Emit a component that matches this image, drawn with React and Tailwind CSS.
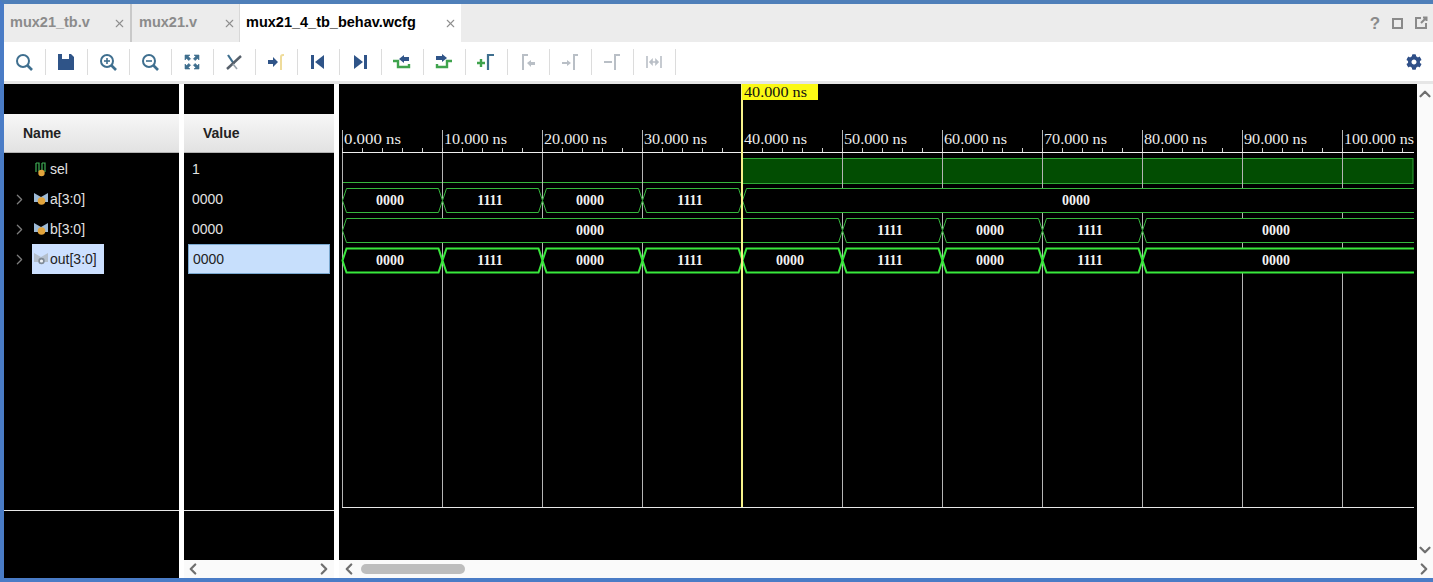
import React from 'react';
import { FaCog } from 'react-icons/fa';
import { ChevronRight, ChevronLeft, ChevronUp, ChevronDown, X } from 'lucide-react';

const NAVY = '#2f5488';
const TEAL = '#3f6f8f';
const GREEN = '#3fa34d';
const MUTED = '#b9bfc6';

const Mag = ({ sign }) => (
  <svg width="20" height="20" viewBox="0 0 20 20" fill="none" stroke={TEAL} strokeWidth="2">
    <circle cx="9" cy="9" r="6" />
    <path d="M13.5 13.5L18 18" strokeWidth="2.6" />
    {sign && <path d="M6 9h6" strokeWidth="1.6" />}
    {sign === 'plus' && <path d="M9 6v6" strokeWidth="1.6" />}
  </svg>
);

const Floppy = () => (
  <svg width="20" height="20" viewBox="0 0 20 20">
    <path d="M2 2h13l3 3v13H2z" fill={NAVY} />
    <rect x="6" y="2" width="7" height="5" fill="#fff" />
    <rect x="5" y="12" width="10" height="6" fill={NAVY} />
  </svg>
);

const Fit = () => (
  <svg width="20" height="20" viewBox="0 0 20 20" fill={TEAL} stroke={TEAL} strokeWidth="0.6">
    <path d="M3 3h5L6.4 4.6 8.6 6.8 6.8 8.6 4.6 6.4 3 8z" />
    <path d="M17 3v5l-1.6-1.6-2.2 2.2-1.8-1.8 2.2-2.2L12 3z" />
    <path d="M3 17v-5l1.6 1.6 2.2-2.2 1.8 1.8-2.2 2.2L8 17z" />
    <path d="M17 17h-5l1.6-1.6-2.2-2.2 1.8-1.8 2.2 2.2L17 12z" />
  </svg>
);

const NoMarker = () => (
  <svg width="20" height="20" viewBox="0 0 20 20" fill="none">
    <path d="M4 3l6 9" stroke={TEAL} strokeWidth="2.2" />
    <path d="M3 17L17 4" stroke="#56606b" strokeWidth="2.4" />
    <path d="M9 12l4 5" stroke="#9aa3ac" strokeWidth="1.6" />
  </svg>
);

const ArrowEdge = ({ color = NAVY, edge = '#efdc9c' }) => (
  <svg width="20" height="20" viewBox="0 0 20 20" fill="none">
    <path d="M2 8h5V5l5 5-5 5v-3H2z" fill={color} />
    <path d="M15 18V5q0-2 2-2h1" stroke={edge} strokeWidth="2" />
  </svg>
);

const SkipStart = () => (
  <svg width="20" height="20" viewBox="0 0 20 20" fill={NAVY}>
    <rect x="3" y="3" width="3" height="14" />
    <path d="M16 3v14L7 10z" />
  </svg>
);

const SkipEnd = () => (
  <svg width="20" height="20" viewBox="0 0 20 20" fill={NAVY}>
    <path d="M4 3v14l9-7z" />
    <rect x="14" y="3" width="3" height="14" />
  </svg>
);

const Falling = () => (
  <svg width="20" height="20" viewBox="0 0 20 20" fill="none">
    <path d="M1 9h5v6h11v-3" stroke={GREEN} strokeWidth="2.4" />
    <path d="M7 7l5-4v2h5v4h-5v2z" fill={NAVY} />
  </svg>
);

const Rising = () => (
  <svg width="20" height="20" viewBox="0 0 20 20" fill="none">
    <path d="M3 12v3h10V9h5" stroke={GREEN} strokeWidth="2.4" />
    <path d="M2 4h6V2l5 4-5 4V8H2z" fill={NAVY} />
  </svg>
);

const AddMarker = () => (
  <svg width="20" height="20" viewBox="0 0 20 20" fill="none">
    <path d="M1 11h8M5 7v8" stroke={GREEN} strokeWidth="2.4" />
    <path d="M12 18V3h6" stroke={TEAL} strokeWidth="2.2" />
  </svg>
);

const PrevMarker = () => (
  <svg width="20" height="20" viewBox="0 0 20 20" fill="none">
    <path d="M5 18V3h5" stroke={MUTED} strokeWidth="2" />
    <path d="M9 11l4-3v2h4v3h-4v2z" fill={MUTED} />
  </svg>
);

const NextMarker = () => (
  <svg width="20" height="20" viewBox="0 0 20 20" fill="none">
    <path d="M2 10h5V8l4 3-4 3v-2H2z" fill={MUTED} />
    <path d="M14 18V3h4" stroke={MUTED} strokeWidth="2" />
  </svg>
);

const RemoveMarker = () => (
  <svg width="20" height="20" viewBox="0 0 20 20" fill="none">
    <path d="M2 10h8" stroke={MUTED} strokeWidth="2" />
    <path d="M13 18V3h5" stroke={MUTED} strokeWidth="2" />
  </svg>
);

const Span = () => (
  <svg width="20" height="20" viewBox="0 0 20 20" fill="none" stroke={MUTED} strokeWidth="1.6">
    <path d="M3 4v12M17 4v12M6 10h8" />
    <path d="M6 10l2-2v4zM14 10l-2-2v4z" fill={MUTED} />
  </svg>
);

const tools = [
  <Mag />, <Floppy />, <Mag sign="plus" />, <Mag sign="minus" />, <Fit />, <NoMarker />, <ArrowEdge />, <SkipStart />,
  <SkipEnd />, <Falling />, <Rising />, <AddMarker />, <PrevMarker />, <NextMarker />, <RemoveMarker />, <Span />,
];

const ScalarIcon = () => (
  <svg width="14" height="16" viewBox="0 0 14 16" className="shrink-0">
    <path d="M2 2v9M2 2h3v9M8 2h3v9M8 2v9" fill="none" stroke="#3fae55" strokeWidth="1.2" />
    <circle cx="7.5" cy="12" r="3.2" fill="#e2a43c" />
  </svg>
);

const BusIcon = ({ out }) => (
  <svg width="16" height="14" viewBox="0 0 16 14" className="shrink-0">
    <path d="M1 1L8 5L15 1V10H1Z" fill={out ? '#b4bfcc' : '#9dbad6'} />
    {out ? (
      <circle cx="8.5" cy="9" r="2.4" fill="#eef2f7" stroke="#7f8a96" strokeWidth="1.6" />
    ) : (
      <circle cx="8.5" cy="9" r="3.8" fill="#e2a43c" />
    )}
  </svg>
);

const signals = [
  { name: 'sel', value: '1' },
  { name: 'a[3:0]', value: '0000', bus: true },
  { name: 'b[3:0]', value: '0000', bus: true },
  { name: 'out[3:0]', value: '0000', bus: true, out: true },
];

const gridXs = [342, 442, 542, 642, 742, 842, 942, 1042, 1142, 1242, 1342];

// [start x, end x, label, label x]
const rows = [
  {
    top: 188,
    segs: [[342, 442, '0000', 390], [442, 542, '1111', 490], [542, 642, '0000', 590], [642, 742, '1111', 690], [742, 1430, '0000', 1076]],
  },
  {
    top: 218,
    segs: [[342, 842, '0000', 590], [842, 942, '1111', 890], [942, 1042, '0000', 990], [1042, 1142, '1111', 1090], [1142, 1430, '0000', 1276]],
  },
  {
    top: 248,
    bold: true,
    segs: [[342, 442, '0000', 390], [442, 542, '1111', 490], [542, 642, '0000', 590], [642, 742, '1111', 690], [742, 842, '0000', 790], [842, 942, '1111', 890], [942, 1042, '0000', 990], [1042, 1142, '1111', 1090], [1142, 1430, '0000', 1276]],
  },
];

const Waveform = () => {
  const ticks = [];
  for (let x = 342; x < 1414; x += 20) ticks.push(x);

  return (
    <svg width="1078" height="476" viewBox="339 84 1078 476" className="block bg-black">
      <defs>
        <clipPath id="waves">
          <rect x="340" y="84" width="1074" height="430" />
        </clipPath>
      </defs>

      {/* sel high part goes under the grid */}
      <path d="M342 182.5H742" stroke="#36b53c" fill="none" />
      <rect x="742" y="158.5" width="671" height="25" fill="#024d02" stroke="#2ea836" />

      {/* grid */}
      {gridXs.map((x) => (
        <line key={x} x1={x + 0.5} x2={x + 0.5} y1={130} y2={507} stroke="#b5b5b5" strokeWidth="1" />
      ))}
      <line x1="342" x2="1414" y1="507.5" y2="507.5" stroke="#e8e8e8" />

      {/* time scale */}
      <line x1="342" x2="1414" y1="152.5" y2="152.5" stroke="#f0f0f0" />
      {ticks.map((x) => (
        <line key={x} x1={x + 0.5} x2={x + 0.5} y1={148} y2={152} stroke="#d0d0d0" />
      ))}
      {gridXs.map((x, i) => (
        <text
          key={x}
          x={x + 2}
          y={144}
          fill="#ececec"
          fontFamily="'Liberation Serif', serif"
          fontSize="15"
          textLength={i === 0 ? 57 : i === 10 ? 70 : 63}
          lengthAdjust="spacingAndGlyphs"
        >
          {i * 10}.000 ns
        </text>
      ))}

      {/* bus rows */}
      <g clipPath="url(#waves)">
        {rows.map((row) =>
          row.segs.map(([a, b, label, lx]) => (
            <g key={row.top + '-' + a}>
              <path
                d={`M${b + 0.5} ${row.top + 12.5}L${b - 3.5} ${row.top + 0.5}H${a + 4.5}L${a + 0.5} ${row.top + 12.5}L${a + 4.5} ${row.top + 24.5}H${b - 3.5}Z`}
                fill="#000"
                stroke={row.bold ? '#38e83c' : '#35b83d'}
                strokeWidth={row.bold ? 2 : 1}
              />
              <text x={lx} y={row.top + 17} fill="#f2f2f2" fontFamily="'Liberation Serif', serif" fontSize="14" fontWeight="700" textAnchor="middle">
                {label}
              </text>
            </g>
          ))
        )}
      </g>

      {/* cursor */}
      <line x1="742" x2="742" y1="84" y2="507" stroke="#f6f28a" strokeWidth="2" />
      <rect x="742" y="84" width="76" height="16" fill="#fbf915" />
      <text x="744" y="97" fill="#111" fontFamily="'Liberation Serif', serif" fontSize="15" textLength="63" lengthAdjust="spacingAndGlyphs">
        40.000 ns
      </text>
    </svg>
  );
};

export default function App() {
  return (
    <div className="w-[1433px] h-[582px] overflow-hidden flex flex-col bg-white border-t-4 border-b-4 border-l-4 border-t-[#4f7fb9] border-b-[#4a7cc6] border-l-[#4a7cc6] font-['Liberation_Sans',Arial,sans-serif]">
      {/* Tabs */}
      <div className="h-[38px] shrink-0 bg-[#ececec] flex items-stretch text-[14.5px] font-bold">
        <div className="w-[128px] flex items-center pl-[6px] pr-[3px] justify-between text-[#8b8b8b] border-r-2 border-[#c9c9c9]">
          <span>mux21_tb.v</span>
          <X size={13} strokeWidth={2} className="text-[#8f8f8f] mr-[1px]" />
        </div>
        <div className="w-[108px] flex items-center pl-[7px] justify-between text-[#8b8b8b] border-r border-[#d8d8d8]">
          <span>mux21.v</span>
          <X size={13} strokeWidth={2} className="text-[#8f8f8f] mr-[3px]" />
        </div>
        <div className="w-[221px] flex items-center pl-[6px] justify-between bg-white text-black">
          <span>mux21_4_tb_behav.wcfg</span>
          <X size={13} strokeWidth={2} className="text-[#8f8f8f] mr-[4px]" />
        </div>
        <div className="flex-1 flex items-center justify-end gap-[9px] pr-[5px] text-[#8a8a8a]">
          <span className="w-[14px] text-center text-[17px] leading-none">?</span>
          <span className="w-[11px] h-[11px] border-2 border-[#8a8a8a] mx-[1px]"></span>
          <svg width="14" height="14" viewBox="0 0 14 14" fill="none" stroke="#8a8a8a" strokeWidth="2" className="ml-[1px]">
            <path d="M7 2H2v10h10V7M7 7l5-5M9 1.5h3.5V5" />
          </svg>
        </div>
      </div>

      {/* Toolbar */}
      <div className="h-[39px] shrink-0 bg-white flex items-center">
        {tools.map((icon, i) => (
          <div key={i} className="w-[42px] h-[26px] pr-[2px] flex items-center justify-center border-r border-[#dcdcdc]">
            {icon}
          </div>
        ))}
        <div className="ml-auto pr-[11px] flex items-center">
          <FaCog size={16} color="#2f4f88" />
        </div>
      </div>
      <div className="h-[3px] shrink-0 bg-[#e6e6e6]"></div>

      {/* Main */}
      <div className="flex-1 min-h-0 flex bg-white">
        {/* Name column */}
        <div className="w-[175px] shrink-0 bg-black flex flex-col text-[14px] text-[#e2e2e2]">
          <div className="h-[30px] shrink-0"></div>
          <div className="h-[39px] shrink-0 pl-[19px] flex items-center font-bold text-[#222] bg-linear-to-b from-[#f7f7f7] to-[#e2e2e2] border-b border-[#b4b4b4]">
            Name
          </div>
          <div className="flex-1 pt-[1px]">
            {signals.map((s) => (
              <div key={s.name} className="h-[30px] flex items-center">
                <div className="w-[28px] shrink-0 flex justify-end">
                  {s.bus && <ChevronRight size={17} strokeWidth={1.8} className="text-[#7d7d7d] mr-[4px]" />}
                </div>
                <div className={`h-[30px] flex items-center gap-[1px] pr-[7px] ${s.out ? 'bg-[#cce0ff] text-[#222]' : ''}`}>
                  <div className="w-[16px] flex justify-center ml-[1px]">
                    {s.bus ? <BusIcon out={s.out} /> : <ScalarIcon />}
                  </div>
                  <span>{s.name}</span>
                </div>
              </div>
            ))}
          </div>
          <div className="h-[68px] shrink-0 border-t border-[#e8e8e8]"></div>
        </div>

        {/* Value column */}
        <div className="w-[150px] shrink-0 ml-[5px] flex flex-col">
          <div className="flex-1 min-h-0 bg-black flex flex-col text-[14px] text-[#e2e2e2]">
            <div className="h-[30px] shrink-0"></div>
            <div className="h-[39px] shrink-0 pl-[19px] flex items-center font-bold text-[#222] bg-linear-to-b from-[#f7f7f7] to-[#e2e2e2] border-b border-[#b4b4b4]">
              Value
            </div>
            <div className="flex-1 pt-[1px]">
              {signals.map((s) => (
                <div key={s.name} className="h-[30px] pl-[4px] pr-[4px] flex items-center">
                  <div className={`w-full h-[30px] flex items-center pl-[4px] ${s.out ? 'bg-[#c7dffc] text-[#222] border border-[#7aa8cf]' : ''}`}>
                    {s.value}
                  </div>
                </div>
              ))}
            </div>
            <div className="h-[50px] shrink-0 border-t border-[#e8e8e8]"></div>
          </div>
          <div className="h-[18px] shrink-0 bg-[#fafafa] flex items-center justify-between pr-[1px] text-[#6f6f6f]">
            <ChevronLeft size={18} strokeWidth={3} />
            <ChevronRight size={18} strokeWidth={3} />
          </div>
        </div>

        {/* Wave column */}
        <div className="w-[1094px] shrink-0 ml-[5px] flex flex-col">
          <div className="flex-1 min-h-0 flex">
            <Waveform />
            <div className="w-[16px] shrink-0 bg-[#fafafa] flex flex-col justify-between items-center py-[1px] text-[#6f6f6f]">
              <ChevronUp size={18} strokeWidth={3} />
              <ChevronDown size={18} strokeWidth={3} />
            </div>
          </div>
          <div className="h-[18px] shrink-0 bg-[#fafafa] flex items-center text-[#6f6f6f]">
            <ChevronLeft size={18} strokeWidth={3} className="ml-px" />
            <div className="w-[104px] h-[10px] rounded-full bg-[#bdbdbd] ml-[3px]"></div>
            <ChevronRight size={18} strokeWidth={3} className="ml-auto" />
          </div>
        </div>
      </div>
    </div>
  );
}
